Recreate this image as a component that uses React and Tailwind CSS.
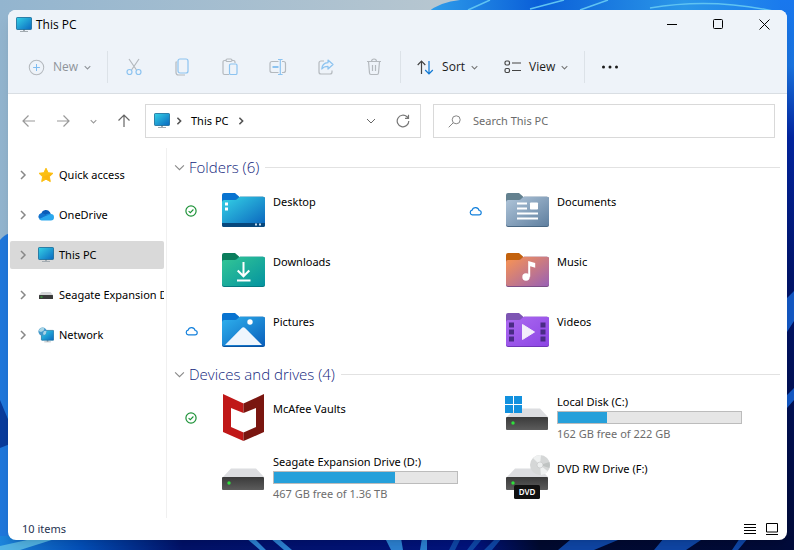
import { useId, useState } from 'react';

const places = [
    { name: 'Quick access', icon: StarIcon },
    { name: 'OneDrive', icon: OneDriveIcon },
    { name: 'This PC', icon: MonitorIcon },
    { name: 'Seagate Expansion Drive (D:)', icon: SmallDriveIcon },
    { name: 'Network', icon: NetworkIcon },
];

const folders = [
    { name: 'Desktop', kind: 'desktop', status: 'synced' },
    { name: 'Documents', kind: 'documents', status: 'cloud' },
    { name: 'Downloads', kind: 'downloads' },
    { name: 'Music', kind: 'music' },
    { name: 'Pictures', kind: 'pictures', status: 'cloud' },
    { name: 'Videos', kind: 'videos' },
];

const drives = [
    { name: 'McAfee Vaults', icon: McAfeeIcon, status: 'synced' },
    { name: 'Local Disk (C:)', icon: WindowsDriveIcon, used: 27, free: '162 GB free of 222 GB' },
    { name: 'Seagate Expansion Drive (D:)', icon: DriveIcon, used: 66, free: '467 GB free of 1.36 TB' },
    { name: 'DVD RW Drive (F:)', icon: DvdIcon },
];

const folderColors = {
    desktop: { tab: '#0873d0', from: '#35d3e6', to: '#0a63bd', edge: '#084a80' },
    downloads: { tab: '#0a7d5c', from: '#34c795', to: '#0493a0', edge: '#067a80' },
    pictures: { tab: '#0873d0', from: '#2fb2ee', to: '#0a5fbb', edge: '#0a529e' },
    documents: { tab: '#63818f', from: '#b1c6da', to: '#5f7f9f', edge: '#496783' },
    music: { tab: '#c3620d', from: '#fb9550', to: '#9961b5', edge: '#7c4f86' },
    videos: { tab: '#7d55b3', from: '#ac6af0', to: '#8c45e4', edge: '#6f36b8' },
};

function Chevron({ className = '', dir = 'right', size = 10 }) {
    const d = dir === 'right' ? 'M3 1l4 4-4 4' : 'M1 3l4 4 4-4';
    return (
        <svg width={size} height={size} viewBox="0 0 10 10" fill="none" stroke="currentColor" className={`shrink-0 ${className}`}>
            <path d={d} />
        </svg>
    );
}

function Monitor() {
    const id = useId();
    return (
        <>
            <defs>
                <linearGradient id={id} x1="0" y1="0" x2="1" y2="1">
                    <stop offset="0" stopColor="#35d2e6" />
                    <stop offset="1" stopColor="#0a68c0" />
                </linearGradient>
            </defs>
            <path d="M7 12h2v2h3v1H4v-1h3z" fill="#a3abb1" />
            <rect x=".5" y=".5" width="15" height="12" rx=".7" fill={`url(#${id})`} stroke="#146a98" strokeWidth=".8" />
        </>
    );
}

function MonitorIcon() {
    return (
        <svg width="16" height="16" viewBox="0 0 16 16" className="shrink-0">
            <Monitor />
        </svg>
    );
}

function StarIcon() {
    return (
        <svg width="16" height="16" viewBox="0 0 16 16" className="shrink-0">
            <path d="M8 1.2l2.1 4.5 4.9.6-3.6 3.4.9 4.9L8 12.2l-4.3 2.4.9-4.9L1 6.3l4.9-.6z" fill="#fcbf12" stroke="#fcbf12" strokeLinejoin="round" />
            <path d="M8 12.2l4.3 2.4-.9-4.9L15 6.3 4.6 9.7z" fill="#f9a90f" opacity=".4" />
        </svg>
    );
}

function OneDriveIcon() {
    return (
        <svg width="16" height="16" viewBox="0 0 16 16" className="shrink-0">
            <path d="M3.2 6.4A5 5 0 0 1 12 5.2l1 2.6-9 5.2A3.4 3.4 0 0 1 3.2 6.4z" fill="#0a5cb8" />
            <path d="M3.4 6.3a3.4 3.4 0 0 0-2.2 5.5L9 8.8 6.3 7a4 4 0 0 0-2.9-.7z" fill="#1273cf" />
            <path d="M7 8l2-1a4 4 0 0 1 4.5.4L12.5 9z" fill="#1687db" />
            <path d="M12.8 7A3.2 3.2 0 0 1 12.8 13.4H3.6A3.5 3.5 0 0 1 1 12l7-3.2z" fill="#2aa8ee" />
        </svg>
    );
}

function SmallDriveIcon() {
    return (
        <svg width="16" height="16" viewBox="0 0 16 16" className="shrink-0">
            <path d="M3.5 5h9L15 8H1z" fill="#d3d5d7" />
            <rect x="1" y="8" width="14" height="4" rx=".5" fill="#3a3a3a" />
            <rect x="2.5" y="9.5" width="2" height="1" fill="#34d03c" />
        </svg>
    );
}

function NetworkIcon() {
    return (
        <svg width="16" height="16" viewBox="0 0 16 16" className="shrink-0">
            <g transform="translate(3 3) scale(.82)">
                <Monitor />
            </g>
            <circle cx="4.6" cy="4.6" r="4.2" fill="#4298ca" />
            <path d="M2 1.5l3-.9 1.5 1.2-1 2L3 5 .7 4zM6 4l2.5 0-.7 3-2 1.2-.8-2z" fill="#a9d5e6" />
        </svg>
    );
}

function StatusIcon({ status }) {
    if (status === 'synced') {
        return (
            <svg width="12" height="12" viewBox="0 0 12 12" fill="none" stroke="#1d9238" role="img" aria-label="Synced">
                <circle cx="6" cy="6" r="5.1" strokeWidth="1.2" />
                <path d="M3.6 6.1l1.7 1.6 3.1-3.2" strokeWidth="1.1" />
            </svg>
        );
    }
    if (status === 'cloud') {
        return (
            <svg width="13" height="12" viewBox="0 0 13 12" fill="none" stroke="#1380dc" strokeWidth="1.2" role="img" aria-label="Online only">
                <path d="M3.2 9.9h6.7a2.2 2.2 0 0 0 .2-4.4A3.6 3.6 0 0 0 3.1 5.2a2.4 2.4 0 0 0 .1 4.7z" />
            </svg>
        );
    }
    return null;
}

function FolderGlyph({ kind }) {
    switch (kind) {
        case 'desktop':
            return (
                <>
                    <path d="M0 31h43v2a2 2 0 0 1-2 2H2a2 2 0 0 1-2-2z" fill="#07477c" />
                    <path d="M3 10.5h3v3H3zM3 15.5h3v3H3z" fill="#fff" />
                    <path d="M33 31.5h2v2h-2zM37 31.5h2v2h-2z" fill="#c6dcee" />
                </>
            );
        case 'downloads':
            return <path d="M21.5 10v14M15.7 18.5l5.8 5.8 5.8-5.8M15 28.5h13.5" fill="none" stroke="#fff" strokeWidth="2" />;
        case 'pictures':
            return (
                <>
                    <circle cx="28" cy="10" r="2.7" fill="#fff" />
                    <path d="M3 33l16.5-16.7a2.6 2.6 0 0 1 3.8 0L40 33z" fill="#eff6fd" />
                </>
            );
        case 'documents':
            return (
                <g fill="#fff">
                    <path d="M11 10.5h10v2H11zM11 15.5h10v2H11zM11 20.5h21v2H11zM11 25.5h21v2H11z" />
                    <rect x="24" y="10.5" width="8" height="7" rx=".8" />
                </g>
            );
        case 'music':
            return (
                <g fill="#fff">
                    <path d="M22.2 9l7 2v4.7l-5-1.5v10.5h-2z" />
                    <circle cx="20" cy="25" r="3.7" />
                </g>
            );
        default:
            return (
                <>
                    <path d="M3 10.5h5v5H3zM3 17.5h5v5H3zM3 24.5h5v5H3zM34.5 10.5h5v5h-5zM34.5 17.5h5v5h-5zM34.5 24.5h5v5h-5z" fill="#4a2b86" />
                    <path d="M16.5 12.5l12 7.5-12 7.5z" fill="#f3eefb" stroke="#f3eefb" strokeLinejoin="round" />
                </>
            );
    }
}

function FolderIcon({ kind }) {
    const id = useId();
    const c = folderColors[kind];
    return (
        <svg width="43" height="35" viewBox="0 0 43 35">
            <defs>
                <linearGradient id={id} x1="0" y1="0" x2="1" y2="1">
                    <stop offset="0" stopColor={c.from} />
                    <stop offset="1" stopColor={c.to} />
                </linearGradient>
            </defs>
            <path d="M0 3a2 2 0 0 1 2-2h11l4 3.5v6H0z" fill={c.tab} />
            <path d="M0 10a2 2 0 0 1 2-2h9.5c2 0 3-.6 4-1.6.9-1 2-1.6 3.5-1.6h22a2 2 0 0 1 2 2V33a2 2 0 0 1-2 2H2a2 2 0 0 1-2-2z" fill={c.edge} />
            <path d="M0 10a2 2 0 0 1 2-2h9.5c2 0 3-.6 4-1.6.9-1 2-1.6 3.5-1.6h22a2 2 0 0 1 2 2V32a2 2 0 0 1-2 2H2a2 2 0 0 1-2-2z" fill={`url(#${id})`} />
            <FolderGlyph kind={kind} />
        </svg>
    );
}

function DriveBody() {
    const id = useId();
    return (
        <>
            <defs>
                <linearGradient id={id} x1="0" y1="0" x2="0" y2="1">
                    <stop offset="0" stopColor="#3a3a3a" />
                    <stop offset="1" stopColor="#5c5c5c" />
                </linearGradient>
            </defs>
            <path d="M9 16.5h25l8.5 9H.5z" fill="#dcdde0" />
            <rect x="0" y="25" width="42" height="13" rx="1" fill={`url(#${id})`} />
            <circle cx="7" cy="31" r="1.7" fill="#2fe03c" />
        </>
    );
}

function DriveIcon() {
    return (
        <svg width="43" height="48" viewBox="0 0 43 48">
            <DriveBody />
        </svg>
    );
}

function WindowsDriveIcon() {
    return (
        <svg width="43" height="48" viewBox="0 0 43 48" className="overflow-visible">
            <DriveBody />
            <path d="M-1 4h8v8h-8zM8 4h8v8H8zM-1 13h8v8h-8zM8 13h8v8H8z" fill="#1291de" />
        </svg>
    );
}

function DvdIcon() {
    return (
        <svg width="43" height="48" viewBox="0 0 43 48" className="overflow-visible">
            <DriveBody />
            <circle cx="34" cy="13" r="10" fill="#d5d7d7" />
            <path d="M34 13L27 6a10 10 0 0 1 8-3zM34 13l8 6.5a10 10 0 0 1-7 3.5z" fill="#eff1f1" />
            <path d="M34 13l9.5-3a10 10 0 0 1 0 6z" fill="#bfc3c2" />
            <circle cx="34" cy="13" r="3" fill="#eceeee" stroke="#c2c5c5" strokeWidth=".6" />
            <rect x="8" y="33" width="26" height="14" rx="1.5" fill="#111" />
            <text x="21" y="43" textAnchor="middle" fill="#fff" className="text-[8px] font-semibold">DVD</text>
        </svg>
    );
}

function McAfeeIcon() {
    return (
        <svg width="43" height="52" viewBox="0 -4 43 52">
            <path d="M1 0l20.5 9.5V19L9 14v19l12.5 5.5V47L1 38z" fill="#c01818" />
            <path d="M42 0L21.5 9.5V19L34 14v19l-12.5 5.5V47L42 38z" fill="#7a1610" />
        </svg>
    );
}

function ToolIcon({ children, size = 20 }) {
    return (
        <svg width={size} height={size} viewBox="0 0 20 20" fill="none" stroke="#b4b9be" strokeWidth="1.2" className="shrink-0">
            {children}
        </svg>
    );
}

const tools = [
    {
        label: 'Cut',
        art: (
            <>
                <path d="M5 2l7.5 11M15 2L7.5 13" />
                <g stroke="#8cc3f0">
                    <circle cx="5.5" cy="15" r="2.5" />
                    <circle cx="14.5" cy="15" r="2.5" />
                </g>
            </>
        ),
    },
    {
        label: 'Copy',
        art: (
            <>
                <path d="M4.5 4.5A2 2 0 0 0 4 6v9.5a2.5 2.5 0 0 0 2.5 2.5H13" />
                <rect x="6" y="2" width="10" height="14" rx="2" stroke="#8cc3f0" />
            </>
        ),
    },
    {
        label: 'Paste',
        art: (
            <>
                <path d="M9 17.5H4.5A1.5 1.5 0 0 1 3 16V5a1.5 1.5 0 0 1 1.5-1.5H6M12 3.5h1.5A1.5 1.5 0 0 1 15 5v1" />
                <rect x="6" y="2" width="6" height="2.5" rx="1.2" />
                <rect x="9.5" y="7" width="7.5" height="10.5" rx="1.3" stroke="#8cc3f0" />
            </>
        ),
    },
    {
        label: 'Rename',
        art: (
            <>
                <path d="M10.5 4.5H4A2 2 0 0 0 2 6.5v7a2 2 0 0 0 2 2h6.5M14 4.5h1.5a2 2 0 0 1 2 2v7a2 2 0 0 1-2 2H14" />
                <path d="M12.3 2.5v15M10 2.5h4.6M10 17.5h4.6" stroke="#8cc3f0" />
                <path d="M4.5 10h6" stroke="#8cc3f0" strokeWidth="2" />
            </>
        ),
    },
    {
        label: 'Share',
        art: (
            <>
                <path d="M8 4H5a2 2 0 0 0-2 2v9a2 2 0 0 0 2 2h9a2 2 0 0 0 2-2v-1.5" />
                <path d="M12 3l5 4.5-5 4.5V9.3c-3 0-4.8.7-6.2 2.7.2-3.8 2.4-6 6.2-6.3z" stroke="#8cc3f0" strokeLinejoin="round" />
            </>
        ),
    },
    {
        label: 'Delete',
        art: <path d="M3 4.5h14M7.5 4.5a2.5 2.5 0 0 1 5 0M4.5 4.5l1 11.5A1.6 1.6 0 0 0 7 17.5h6a1.6 1.6 0 0 0 1.5-1.5l1-11.5M8.5 8v6M11.5 8v6" />,
    },
];

function Toolbar() {
    return (
        <div className="flex h-[54px] items-center pt-0.5 pl-5 text-[12px] text-[#1b1b1b]">
            <button type="button" disabled className="flex items-center gap-1.5 text-[#8f9499]">
                <ToolIcon size={17}>
                    <circle cx="10" cy="10" r="8.5" />
                    <path d="M10 6v8M6 10h8" stroke="#7fbcf0" />
                </ToolIcon>
                <span className="pl-0.5">New</span>
                <Chevron dir="down" size={7} className="stroke-[1.5]" />
            </button>
            <div className="ml-4 h-8 w-px bg-[#dce2e8]" />
            <div className="flex gap-7 px-4">
                {tools.map((tool) => (
                    <button key={tool.label} type="button" disabled aria-label={tool.label}>
                        <ToolIcon>{tool.art}</ToolIcon>
                    </button>
                ))}
            </div>
            <div className="h-8 w-px bg-[#dce2e8]" />
            <button type="button" className="ml-4 flex items-center gap-1.5">
                <svg width="17" height="15" viewBox="0 0 17 15" fill="none" strokeWidth="1.2">
                    <path d="M4.5 14V1M.7 5l3.8-4 3.8 4" stroke="#444" />
                    <path d="M12 1v13M8.2 10l3.8 4 3.8-4" stroke="#0f78d4" />
                </svg>
                <span className="pl-0.5">Sort</span>
                <Chevron dir="down" size={7} className="stroke-[1.5] text-[#777]" />
            </button>
            <button type="button" className="ml-[26px] flex items-center gap-1.5">
                <svg width="17" height="14" viewBox="0 0 17 14" fill="none" stroke="#444" strokeWidth="1.2">
                    <rect x="1" y="1" width="4.5" height="4" rx="1.5" />
                    <rect x="1" y="8.5" width="4.5" height="4" rx="1.5" />
                    <path d="M8 3h9M8 10.5h9" />
                </svg>
                <span className="pl-0.5">View</span>
                <Chevron dir="down" size={7} className="stroke-[1.5] text-[#777]" />
            </button>
            <div className="ml-4 h-8 w-px bg-[#dce2e8]" />
            <button type="button" aria-label="See more" className="ml-4">
                <svg width="18" height="4" viewBox="0 0 18 4" fill="#1b1b1b">
                    <circle cx="2.5" cy="2" r="1.5" />
                    <circle cx="9" cy="2" r="1.5" />
                    <circle cx="15.5" cy="2" r="1.5" />
                </svg>
            </button>
        </div>
    );
}

function Arrow({ dir, className }) {
    const paths = {
        left: 'M6.5 1.5L1 7l5.5 5.5M1 7h12',
        right: 'M7.5 1.5L13 7l-5.5 5.5M13 7H1',
        up: 'M1.5 6.5L7 1l5.5 5.5M7 1v12',
    };
    return (
        <svg width="14" height="14" viewBox="0 0 14 14" fill="none" stroke="currentColor" strokeWidth="1.2" className={className}>
            <path d={paths[dir]} />
        </svg>
    );
}

function AddressRow() {
    return (
        <div className="flex h-[54px] items-center pr-3 pl-[14px]">
            <div className="flex w-[123px] items-center gap-5 text-[#999]">
                <button type="button" aria-label="Back"><Arrow dir="left" /></button>
                <button type="button" aria-label="Forward"><Arrow dir="right" /></button>
                <button type="button" aria-label="Recent locations"><Chevron dir="down" size={7} className="stroke-[1.5]" /></button>
                <button type="button" aria-label="Up"><Arrow dir="up" className="text-[#666]" /></button>
            </div>
            <div className="flex h-[34px] flex-[256] items-center border border-[#d9d9d9] pr-2.5 pl-2">
                <MonitorIcon />
                <Chevron size={8} className="ml-[5px] stroke-2 text-[#555]" />
                <button type="button" className="ml-2 text-black">This PC</button>
                <Chevron size={8} className="ml-2 stroke-2 text-[#555]" />
                <button type="button" aria-label="Previous locations" className="ml-auto text-[#666]">
                    <Chevron dir="down" />
                </button>
                <button type="button" aria-label="Refresh" className="ml-5">
                    <svg width="14" height="14" viewBox="0 0 14 14" fill="none" stroke="#777" strokeWidth="1.2">
                        <path d="M12.8 7A5.8 5.8 0 1 1 11 2.8L12.3 4M12.5.8V4.3H9" />
                    </svg>
                </button>
            </div>
            <label className="ml-3 flex h-[34px] flex-[326] items-center gap-3 border border-[#d9d9d9] pl-3.5">
                <svg width="13" height="13" viewBox="0 0 13 13" fill="none" stroke="#858585" className="shrink-0">
                    <circle cx="8.2" cy="4.8" r="4" />
                    <path d="M5.3 7.7L.7 12.3" />
                </svg>
                <input type="text" aria-label="Search This PC" placeholder="Search This PC" className="w-full bg-transparent outline-none placeholder:text-[#6b6b6b]" />
            </label>
        </div>
    );
}

function Group({ title, children }) {
    const [open, setOpen] = useState(true);
    return (
        <section>
            <h2 className="flex h-[27px] items-center gap-1.5 pl-1 font-['Open_Sans',sans-serif] text-[15px] font-light text-[#12267c]">
                <button type="button" onClick={() => setOpen(!open)} className="flex items-center gap-1 whitespace-nowrap">
                    <Chevron dir="down" size={11} className="text-[#8a8a8a]" />
                    {title}
                </button>
                <span className="h-px flex-1 bg-[#e2e2e2]" />
            </h2>
            {open && <ul className="grid grid-cols-[repeat(auto-fill,284px)]">{children}</ul>}
        </section>
    );
}

function Tile({ icon, name, status, free, used }) {
    return (
        <li className="flex h-[60px]">
            <div className="flex w-[52px] shrink-0 items-center justify-center pr-2.5">
                <StatusIcon status={status} />
            </div>
            <div className="flex w-[51px] shrink-0 items-center pb-1">{icon}</div>
            <div className={`min-w-0 flex-1 whitespace-nowrap leading-4 ${free ? 'pt-[6px]' : 'pt-[13px]'}`}>
                <p>{name}</p>
                {free && (
                    <>
                        <div className="mt-px mb-0.5 flex h-[13px] w-[185px] max-w-none border border-[#bcbcbc] bg-[#e6e6e6]">
                            <div className="bg-[#26a0da]" style={{ width: `${used}%` }} />
                        </div>
                        <p className="text-[#6d6d6d]">{free}</p>
                    </>
                )}
            </div>
        </li>
    );
}

function Wallpaper() {
    return (
        <svg className="absolute inset-0 h-full w-full" viewBox="0 0 794 550" preserveAspectRatio="none" aria-hidden="true">
            <defs>
                <linearGradient id="sky" x1="0" y1="0" x2="1" y2="0">
                    <stop offset="0" stopColor="#93b5cf" />
                    <stop offset=".55" stopColor="#b6c6d0" />
                </linearGradient>
                <linearGradient id="bloom" x1="0" y1="0" x2="1" y2="0">
                    <stop offset="0" stopColor="#2f9eea" />
                    <stop offset=".3" stopColor="#0a5fd8" />
                    <stop offset=".7" stopColor="#2b97e8" />
                    <stop offset="1" stopColor="#1877ee" />
                </linearGradient>
                <linearGradient id="right" x1="0" y1="0" x2="0" y2="1">
                    <stop offset="0" stopColor="#1877ee" />
                    <stop offset=".12" stopColor="#1a73e0" />
                    <stop offset=".25" stopColor="#0325a0" />
                    <stop offset=".5" stopColor="#02156c" />
                    <stop offset="1" stopColor="#020b38" />
                </linearGradient>
                <linearGradient id="floor" x1="0" y1="0" x2="1" y2="0">
                    <stop offset="0" stopColor="#1d86dc" />
                    <stop offset=".1" stopColor="#0452bd" />
                    <stop offset=".23" stopColor="#02126a" />
                    <stop offset=".6" stopColor="#021480" />
                    <stop offset=".68" stopColor="#010a30" />
                    <stop offset="1" stopColor="#010b3a" />
                </linearGradient>
            </defs>
            <rect width="794" height="550" fill="url(#sky)" />
            <path d="M428 12Q440 2 460 0H794V12z" fill="url(#bloom)" />
            <path d="M468 10l22-10M530 9l34-9M580 10l28-10M650 8q70-12 144 8" fill="none" stroke="#5fc3f2" strokeWidth="1.5" />
            <rect x="780" width="14" height="550" fill="url(#right)" />
            <path d="M780 305l14-14v30l-14 22zM780 402l14-14v12l-14 16z" fill="#1458c4" />
            <path d="M0 240q4-5 10-7v310H0z" fill="#1f77dc" />
            <path d="M0 400l10 24v20l-10 4z" fill="#0a3c9c" />
            <rect y="536" width="794" height="14" fill="url(#floor)" />
            <path d="M0 546l36-8h22L20 550H0z" fill="#53b5e6" />
            <path d="M246 538h8l12 12h-6zM270 538h8l14 12h-8zM385 538h16l2 12h-12zM422 538h5v12h-7z" fill="#2d83d4" />
            <path d="M455 538h6l-6 12h-6zM476 538h7l-10 12h-6zM496 538h6l-10 12h-8zM570 540h48l-24 10h-36zM664 538h40l-18 12h-32zM740 538h8l-10 12h-6z" fill="#0f47a8" />
        </svg>
    );
}

export default function App() {
    const [selected, setSelected] = useState('This PC');

    return (
        <div className="relative flex min-h-screen pt-2.5 pr-[7px] pb-2.5 pl-2 font-['Noto_Sans','Open_Sans',sans-serif] text-[11px] text-black">
            <Wallpaper />
            <div className="relative flex min-w-0 flex-1 flex-col overflow-hidden rounded-lg bg-white shadow-lg">
                <header className="border-b border-[#d9dee3] bg-[#eef3f9] font-['Open_Sans',sans-serif]">
                    <div className="flex h-[29px] items-center gap-1 pl-2 text-[12px]">
                        <MonitorIcon />
                        <h1>This PC</h1>
                        <div className="ml-auto flex items-center">
                            <button type="button" aria-label="Minimize" className="flex w-[46px] justify-center">
                                <svg width="11" height="11" viewBox="0 0 11 11" stroke="#000"><path d="M0 5.5h10" /></svg>
                            </button>
                            <button type="button" aria-label="Maximize" className="flex w-[46px] justify-center">
                                <svg width="11" height="11" viewBox="0 0 11 11" fill="none" stroke="#000"><rect x=".5" y=".5" width="9" height="9" rx="1" /></svg>
                            </button>
                            <button type="button" aria-label="Close" className="flex w-[46px] justify-center">
                                <svg width="11" height="11" viewBox="0 0 11 11" stroke="#000"><path d="M.5.5l10 10M10.5.5l-10 10" /></svg>
                            </button>
                        </div>
                    </div>
                    <Toolbar />
                </header>

                <AddressRow />

                <div className="flex flex-1">
                    <nav className="w-[159px] shrink-0 border-r border-[#f0f0f0] pr-0.5 pl-0.5">
                        {places.map(({ name, icon: Icon }) => (
                            <div key={name} className="flex h-10 items-center first:mt-[7px]">
                                <button
                                    type="button"
                                    onClick={() => setSelected(name)}
                                    className={`flex h-7 w-full items-center overflow-hidden rounded-xs pl-2 whitespace-nowrap ${selected === name ? 'bg-[#d9d9d9]' : 'hover:bg-gray-100'}`}
                                >
                                    <Chevron className="mr-2.5 stroke-[1.5] text-[#888]" />
                                    <Icon />
                                    <span className="ml-[5px]">{name}</span>
                                </button>
                            </div>
                        ))}
                    </nav>

                    <main className="min-w-0 flex-1 pt-1.5 pr-[7px] pl-[3px]">
                        <Group title="Folders (6)">
                            {folders.map((folder) => (
                                <Tile key={folder.name} name={folder.name} status={folder.status} icon={<FolderIcon kind={folder.kind} />} />
                            ))}
                        </Group>
                        <Group title="Devices and drives (4)">
                            {drives.map(({ icon: Icon, ...drive }) => (
                                <Tile key={drive.name} {...drive} icon={<Icon />} />
                            ))}
                        </Group>
                    </main>
                </div>

                <footer className="flex h-[22px] items-center justify-between pr-[9px] pl-3.5 text-[#1f3350]">
                    <span>10 items</span>
                    <div className="flex gap-2.5">
                        <button type="button" aria-label="Details view">
                            <svg width="12" height="12" viewBox="0 0 12 12" stroke="#000"><path d="M0 1.5h12M0 4.5h12M0 7.5h12M0 10.5h12" /></svg>
                        </button>
                        <button type="button" aria-label="Large icons view">
                            <svg width="12" height="12" viewBox="0 0 12 12" fill="none" stroke="#000"><path d="M.5.5h11v8.5H.5zM0 11.5h12" /></svg>
                        </button>
                    </div>
                </footer>
            </div>
        </div>
    );
}
